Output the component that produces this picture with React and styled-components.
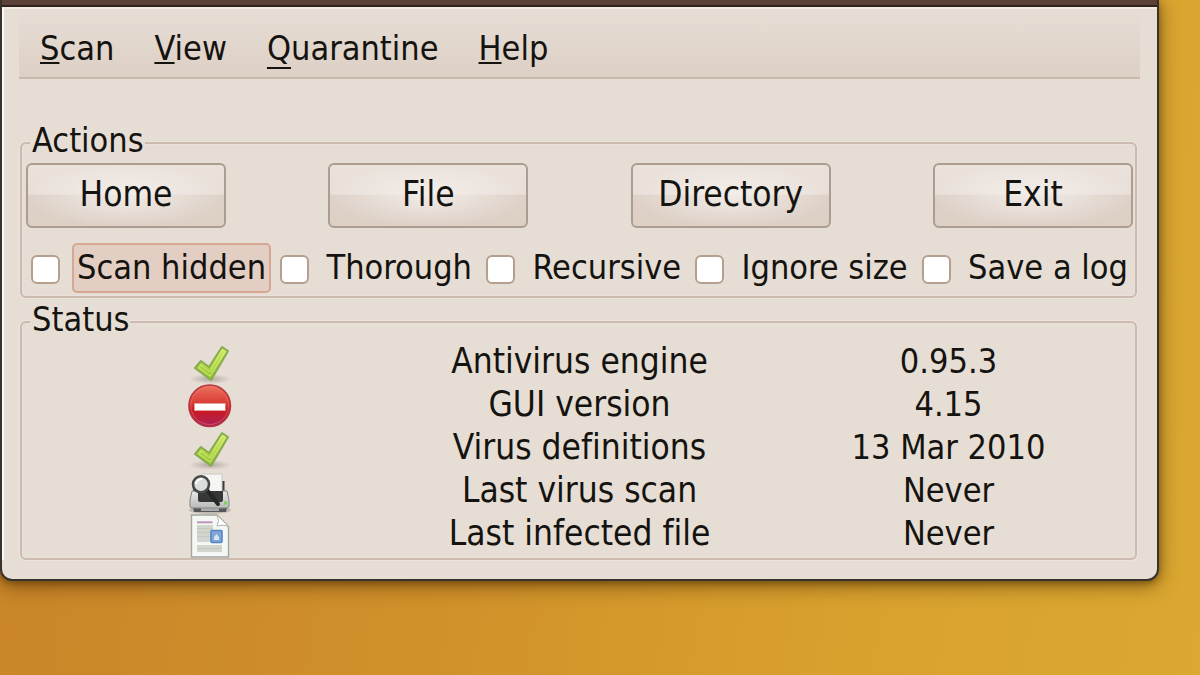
import React, { useState } from "react";
import styled, { createGlobalStyle } from "styled-components";

const GlobalStyle = createGlobalStyle`
  * {
    box-sizing: border-box;
  }
  body {
    margin: 0;
    font-family: "DejaVu Sans Condensed", "DejaVu Sans", sans-serif;
    font-size: 34px;
    line-height: 38px;
    font-variant-ligatures: none;
    color: #15130f;
  }
`;

const Desktop = styled.div`
  min-height: 100vh;
  padding-right: 41px;
  overflow: hidden;
  background: linear-gradient(97deg, #c98429 0%, #d0912a 40%, #d9a22e 75%, #dba831 100%);
`;

const Window = styled.main`
  background: #e6ddd4;
  border: 2px solid #38322d;
  border-top: none;
  border-radius: 0 0 12px 12px;
  box-shadow: 0 4px 20px rgba(70, 40, 0, 0.6), 0 2px 6px rgba(70, 40, 0, 0.4);
  padding-bottom: 19px;
`;

const TitleBar = styled.div`
  height: 7px;
  background: #5b4138;
  border-bottom: 2px solid #2f211c;
`;

const Body = styled.div`
  padding: 3px 17px 0 15px;
  border-left: 2px solid #fbf8f5;
  border-top: 2px solid #f2ebe2;
`;

const MenuBar = styled.nav`
  display: flex;
  align-items: center;
  height: 67px;
  padding: 7px 0 0 21px;
  gap: 40px;
  background: linear-gradient(#e6ddd4, #ddd0c6);
  border-bottom: 2px solid #cbb9ac;
`;

const MenuItem = styled.button`
  border: none;
  background: none;
  padding: 0;
  font: inherit;
  color: inherit;
  span {
    text-decoration: underline;
    text-decoration-thickness: 2px;
    text-decoration-skip-ink: none;
    text-underline-offset: ${(props) => (props.$low ? "7px" : "2px")};
  }
`;

const Group = styled.fieldset`
  min-width: 0;
  margin: ${(props) => props.$top}px 3px 0 1px;
  padding: 3px 2px 1px 4px;
  border: 2px solid #cbbaad;
  border-radius: 6px;
  box-shadow: 0 0 0 1px #ece5de, inset 0 0 0 1px #eae2da;
  legend {
    padding: 0 1px 6px 2px;
    margin-left: 4px;
    line-height: 28px;
    background: #e6ddd4;
  }
`;

const ButtonRow = styled.div`
  display: flex;
  justify-content: space-between;
  gap: 16px;
`;

const ActionButton = styled.button`
  width: 200px;
  height: 65px;
  padding: 0 0 3px;
  font: inherit;
  font-size: 35px;
  color: inherit;
  border: 2px solid #ac9d91;
  border-radius: 6px;
  background: radial-gradient(ellipse 50% 56% at center, rgba(248, 245, 243, 0.7), rgba(248, 245, 243, 0)),
    linear-gradient(#eae1da 0%, #e8dfd8 48%, #ded2c8 49%, #dccfc4 100%);
`;

const CheckRow = styled.div`
  display: flex;
  justify-content: space-between;
  margin: 15px 0 2px 5px;
`;

const CheckField = styled.label`
  display: flex;
  align-items: center;
  gap: 12px;
  white-space: nowrap;
  input {
    appearance: none;
    width: 29px;
    height: 29px;
    margin: 2px 0 0;
    background: #ffffff;
    border: 2px solid #b5a090;
    border-radius: 6px;
    &:checked {
      background: radial-gradient(#3a3029 35%, #ffffff 40%);
    }
  }
  span {
    height: 50px;
    padding: 3px 3px 0;
    border: 2px solid ${(props) => (props.$active ? "#d9a692" : "transparent")};
    border-radius: 5px;
    background: ${(props) => (props.$active ? "#e2cec2" : "none")};
  }
`;

const StatusTable = styled.table`
  width: 100%;
  table-layout: fixed;
  border-collapse: collapse;
  line-height: 34px;
  td,
  th {
    height: 43px;
    padding: 0 0 6px;
    font-weight: normal;
    text-align: center;
  }
  th {
    font-size: 35px;
  }
  td:first-child {
    padding: 0;
  }
  svg {
    display: block;
    margin: 0 auto;
    overflow: visible;
  }
`;

const CheckIcon = () => (
  <svg width="44" height="43" viewBox="2 2 44 43">
    <defs>
      <linearGradient id="leaf" x1="0" y1="0" x2="0" y2="1">
        <stop offset="0" stopColor="#d3ec62" />
        <stop offset="1" stopColor="#94c52f" />
      </linearGradient>
      <radialGradient id="shade">
        <stop offset="0" stopColor="#8f867d" stopOpacity="0.6" />
        <stop offset="1" stopColor="#8f867d" stopOpacity="0" />
      </radialGradient>
    </defs>
    <ellipse cx="23" cy="39" rx="21" ry="5" fill="url(#shade)" />
    <path
      d="M35 7L41 11L24 40L8 28L14 21L22 27Z"
      fill="url(#leaf)"
      stroke="#86ab50"
      strokeWidth="2"
      strokeLinejoin="round"
    />
    <path d="M35 10L38 12L23 36L12 28L14 25L23 32Z" fill="none" stroke="#e0f08c" strokeWidth="1" opacity="0.7" />
  </svg>
);

const StopIcon = () => (
  <svg width="44" height="43" viewBox="2 2 44 43">
    <defs>
      <linearGradient id="stop" x1="0" y1="0" x2="0" y2="1">
        <stop offset="0" stopColor="#ee7460" />
        <stop offset="0.45" stopColor="#d83a34" />
        <stop offset="0.6" stopColor="#cc1820" />
        <stop offset="1" stopColor="#a9235c" />
      </linearGradient>
    </defs>
    <circle cx="22.7" cy="22.7" r="20.8" fill="url(#stop)" stroke="#b23640" strokeWidth="1.5" />
    <circle cx="22.7" cy="22.7" r="18.8" fill="none" stroke="#ee7a6b" strokeWidth="1" opacity="0.5" />
    <rect x="7.3" y="20.3" width="31" height="7.4" fill="#ffffff" stroke="#d98a8a" strokeWidth="0.6" />
  </svg>
);

const ScannerIcon = () => (
  <svg width="44" height="43" viewBox="2 1 44 43">
    <defs>
      <linearGradient id="case" x1="0" y1="0" x2="0" y2="1">
        <stop offset="0" stopColor="#e9e9e8" />
        <stop offset="1" stopColor="#b9bab8" />
      </linearGradient>
    </defs>
    <ellipse cx="23" cy="40" rx="21" ry="4" fill="#8f867d" opacity="0.4" />
    <path d="M6 11h4v11H6zM35 11h2.5v11H35z" fill="#3c3c3c" />
    <path d="M5 34h36l-2 8H7z" fill="#55585a" />
    <path d="M14 38h18v3H14z" fill="#a9acaa" />
    <path d="M5 21h35l2 9v6q0 2-2 2H5q-2 0-2-2v-6z" fill="url(#case)" stroke="#858784" strokeWidth="1" />
    <path d="M15 4h20v18H15z" fill="#f5f5f4" stroke="#c9c9c7" strokeWidth="1" />
    <path d="M11 21h25v9q0 2-2 2H13q-2 0-2-2z" fill="#343638" />
    <path d="M20 20l11 14" stroke="#252627" strokeWidth="4" strokeLinecap="round" />
    <circle cx="14" cy="14.3" r="8" fill="#dcdedd" stroke="#474948" strokeWidth="2.6" />
    <path d="M9 14a5.500 5.500 0 0 1 6-5" fill="none" stroke="#ffffff" strokeWidth="2" />
    <rect x="37" y="31.500" width="3" height="3" fill="#75d84e" />
  </svg>
);

const DocumentIcon = () => (
  <svg width="44" height="43" viewBox="2 2 44 43">
    <path
      d="M4.500 3H30L41.500 14.500V45H4.500Z"
      fill="#f5f7f4"
      stroke="#a2a8a1"
      strokeWidth="1.400"
    />
    <path d="M30 3Q33 9 30 14Q36 12 41.500 14.500Z" fill="#ffffff" stroke="#b1b5b0" strokeWidth="1" />
    <path d="M10 13h16v17H10zM10 33h25v7H10z" fill="#d0d5ce" />
    <path d="M10 16.500h16M10 20.500h16M10 24.500h16M10 36.500h25" stroke="#c3c9c1" strokeWidth="1" />
    <path d="M10 10.300h15.500" stroke="#bd94b8" strokeWidth="2" />
    <rect x="24" y="18.500" width="11" height="12" rx="1" fill="#7fa6d6" stroke="#5585c1" strokeWidth="1.600" />
    <path d="M27 28v-3l2.500-3l2.500 3v3z" fill="#d6e4f4" />
  </svg>
);

const menus = [
  { key: "S", rest: "can" },
  { key: "V", rest: "iew" },
  { key: "Q", rest: "uarantine", low: true },
  { key: "H", rest: "elp" },
];

const actions = ["Home", "File", "Directory", "Exit"];

const options = ["Scan hidden", "Thorough", "Recursive", "Ignore size", "Save a log"];

const statusRows = [
  { icon: <CheckIcon />, name: "Antivirus engine", value: "0.95.3" },
  { icon: <StopIcon />, name: "GUI version", value: "4.15" },
  { icon: <CheckIcon />, name: "Virus definitions", value: "13 Mar 2010" },
  { icon: <ScannerIcon />, name: "Last virus scan", value: "Never" },
  { icon: <DocumentIcon />, name: "Last infected file", value: "Never" },
];

const App = () => {
  const [checked, setChecked] = useState({});
  const [active, setActive] = useState("Scan hidden");

  const onToggle = (name) => {
    setChecked({ ...checked, [name]: !checked[name] });
    setActive(name);
  };

  return (
    <Desktop>
      <GlobalStyle />
      <Window>
        <TitleBar />
        <Body>
          <MenuBar>
            {menus.map((menu) => (
              <MenuItem key={menu.key} type="button" $low={menu.low}>
                <span>{menu.key}</span>
                {menu.rest}
              </MenuItem>
            ))}
          </MenuBar>
          <Group $top={47}>
            <legend>Actions</legend>
            <ButtonRow>
              {actions.map((name) => (
                <ActionButton key={name} type="button">
                  {name}
                </ActionButton>
              ))}
            </ButtonRow>
            <CheckRow>
              {options.map((name) => (
                <CheckField key={name} $active={active === name}>
                  <input type="checkbox" checked={!!checked[name]} onChange={() => onToggle(name)} />
                  <span>{name}</span>
                </CheckField>
              ))}
            </CheckRow>
          </Group>
          <Group $top={7}>
            <legend>Status</legend>
            <StatusTable>
              <tbody>
                {statusRows.map((row) => (
                  <tr key={row.name}>
                    <td>{row.icon}</td>
                    <th scope="row">{row.name}</th>
                    <td>{row.value}</td>
                  </tr>
                ))}
              </tbody>
            </StatusTable>
          </Group>
        </Body>
      </Window>
    </Desktop>
  );
};

export default App;
